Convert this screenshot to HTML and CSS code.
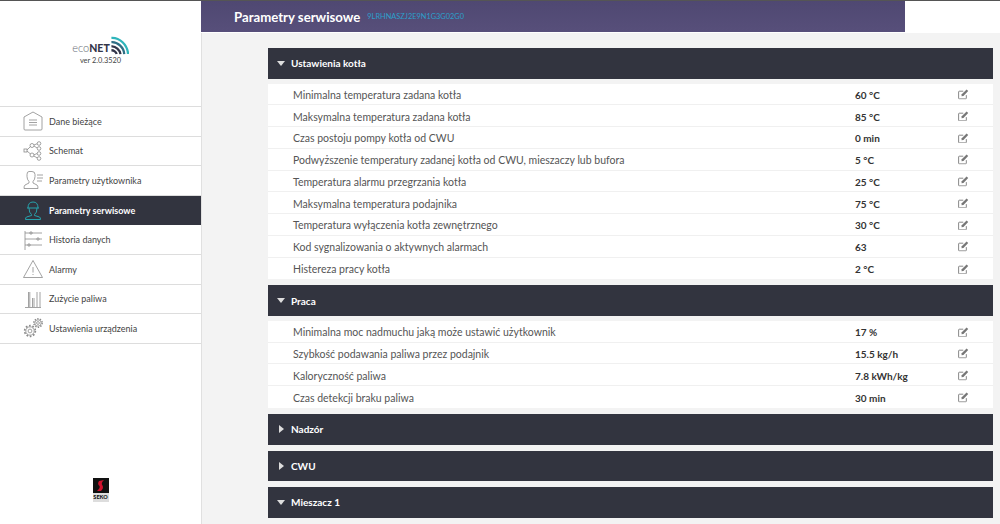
FILE: index.html
```html
<!DOCTYPE html>
<html lang="pl">
<head>
<meta charset="utf-8">
<title>Parametry serwisowe</title>
<link rel="stylesheet" href="styles.css">
</head>
<body>
<div class="app">
  <aside class="sidebar">
    <div class="brand">
      <div class="logo">
        <span class="logo-eco">eco</span><span class="logo-net">NET</span>
        <svg class="logo-waves" viewBox="0 0 20 20" width="19" height="19" fill="none" stroke-width="2.4">
          <path d="M1.500 2 C10 1.500 18.500 9 19 19" stroke="#2fb5bb"/>
          <path d="M1.500 6.500 C8 6 14.500 12 15 19" stroke="#2f6f85"/>
          <path d="M1.500 11 C6 10.500 10.500 15 11 19" stroke="#33364a"/>
          <path d="M1.500 15 C4 15 6.500 17 7 19" stroke="#33364a"/>
        </svg>
      </div>
      <div class="version">ver 2.0.3520</div>
    </div>
    <nav class="menu">
      <a class="menu-item"><svg class="menu-icon" viewBox="0 0 20 20" fill="none" stroke="#8a8a8a" stroke-width="0.8"><path d="M1 6 L10 1 L19 6 V18 Q19 19 18 19 H2 Q1 19 1 18 Z"/><path d="M6 9h8M6 11.500h8M6 14h8"/></svg>Dane bieżące</a>
      <a class="menu-item"><svg class="menu-icon" viewBox="0 0 20 20" fill="none" stroke="#8a8a8a" stroke-width="0.8"><rect x="1" y="8" width="3" height="3"/><circle cx="9" cy="4.500" r="2"/><circle cx="9" cy="14" r="2"/><circle cx="16" cy="2.500" r="1.800"/><circle cx="16" cy="7.500" r="1.800"/><circle cx="16" cy="12.500" r="1.800"/><circle cx="16" cy="17.500" r="1.800"/><path d="M4 9l3.500-3.500M4 10l3.500 3M11 4l3.200-1.300M11 5l3.200 2M11 13.800l3.200-1.300M10.800 15l3.700 2"/></svg>Schemat</a>
      <a class="menu-item"><svg class="menu-icon" viewBox="0 0 20 20" fill="none" stroke="#8a8a8a" stroke-width="0.8"><path d="M6 1.500h3q3 0 3 3v2q0 3-2 5v1.500l4 2q1 .7 1 3.500H1q0-2.800 1-3.500l4-2v-1.500q-2-2-2-5v-2q0-3 2-3z"/><path d="M14 5h6M14 8h6M14 11h5"/></svg>Parametry użytkownika</a>
      <a class="menu-item menu-item-active"><svg class="menu-icon" viewBox="0 0 20 20" fill="none" stroke="#27a3ad" stroke-width="1"><path d="M5 8q0-6 5-6t5 6M4 8h12M6 8q0 5 2.500 6.500v1l-5 1.500q-1 .5-1 2.500h15q0-2-1-2.500l-5-1.500v-1Q14 13 14 8"/></svg>Parametry serwisowe</a>
      <a class="menu-item"><svg class="menu-icon" viewBox="0 0 20 20" fill="none" stroke="#8a8a8a" stroke-width="0.8"><path d="M2 1v19M2 3h17M2 9h17M2 15h17"/><circle cx="8" cy="3" r="1.200"/><circle cx="15" cy="9" r="1.200"/><circle cx="6" cy="15" r="1.200"/></svg>Historia danych</a>
      <a class="menu-item"><svg class="menu-icon" viewBox="0 0 20 20" fill="none" stroke="#8a8a8a" stroke-width="0.8"><path d="M10 1.500 L19.500 18.500 H.5 Z"/><path d="M10 8v5.500M10 15v1"/></svg>Alarmy</a>
      <a class="menu-item"><svg class="menu-icon" viewBox="0 0 20 20" fill="none" stroke="#8a8a8a" stroke-width="0.8"><path d="M2 18.500h16M5.500 18V3M6.800 18V3M9.500 18V9M11 18V9M14 18V3M17 18V3"/></svg>Zużycie paliwa</a>
      <a class="menu-item"><svg class="menu-icon" viewBox="0 0 20 20" fill="none" stroke="#8a8a8a"><circle cx="7" cy="13" r="4.200" stroke-width="0.8"/><circle cx="7" cy="13" r="5.400" stroke-width="1.600" stroke-dasharray="1.700 1.700"/><circle cx="7" cy="13" r="1.900" stroke-width="0.8"/><circle cx="15" cy="5" r="3.200" stroke-width="0.8"/><circle cx="15" cy="5" r="4.200" stroke-width="1.400" stroke-dasharray="1.400 1.240"/><circle cx="15" cy="5" r="1.400" stroke-width="0.8"/></svg>Ustawienia urządzenia</a>
    </nav>
    <div class="seko">
      <div class="seko-mark"><svg viewBox="0 0 15 15" width="15" height="15"><path d="M11 2 L6 3 Q4 6 6.500 8 Q7.500 10 4 13 L8 13 Q11 10 9.500 7.500 Q7.500 5 11 2Z" fill="#d0122e"/></svg></div>
      <div class="seko-name">SEKO</div>
    </div>
  </aside>
  <main class="main">
    <header class="topbar-row">
      <div class="topbar">
        <h1 class="page-title">Parametry serwisowe</h1>
        <span class="device-id">9LRHNASZJ2E9N1G3G02G0</span>
      </div>
    </header>
    <div class="content">
      <section class="group">
        <h2 class="group-head"><span class="tri tri-down"></span>Ustawienia kotła</h2>
        <div class="rows">
          <div class="row"><span class="row-name">Minimalna temperatura zadana kotła</span><span class="row-val">60 °C</span><svg class="edit" viewBox="0 0 12 12"><use href="#pen"/></svg></div>
          <div class="row"><span class="row-name">Maksymalna temperatura zadana kotła</span><span class="row-val">85 °C</span><svg class="edit" viewBox="0 0 12 12"><use href="#pen"/></svg></div>
          <div class="row"><span class="row-name">Czas postoju pompy kotła od CWU</span><span class="row-val">0 min</span><svg class="edit" viewBox="0 0 12 12"><use href="#pen"/></svg></div>
          <div class="row"><span class="row-name">Podwyższenie temperatury zadanej kotła od CWU, mieszaczy lub bufora</span><span class="row-val">5 °C</span><svg class="edit" viewBox="0 0 12 12"><use href="#pen"/></svg></div>
          <div class="row"><span class="row-name">Temperatura alarmu przegrzania kotła</span><span class="row-val">25 °C</span><svg class="edit" viewBox="0 0 12 12"><use href="#pen"/></svg></div>
          <div class="row"><span class="row-name">Maksymalna temperatura podajnika</span><span class="row-val">75 °C</span><svg class="edit" viewBox="0 0 12 12"><use href="#pen"/></svg></div>
          <div class="row"><span class="row-name">Temperatura wyłączenia kotła zewnętrznego</span><span class="row-val">30 °C</span><svg class="edit" viewBox="0 0 12 12"><use href="#pen"/></svg></div>
          <div class="row"><span class="row-name">Kod sygnalizowania o aktywnych alarmach</span><span class="row-val">63</span><svg class="edit" viewBox="0 0 12 12"><use href="#pen"/></svg></div>
          <div class="row"><span class="row-name">Histereza pracy kotła</span><span class="row-val">2 °C</span><svg class="edit" viewBox="0 0 12 12"><use href="#pen"/></svg></div>
        </div>
      </section>
      <section class="group">
        <h2 class="group-head"><span class="tri tri-down"></span>Praca</h2>
        <div class="rows">
          <div class="row"><span class="row-name">Minimalna moc nadmuchu jaką może ustawić użytkownik</span><span class="row-val">17 %</span><svg class="edit" viewBox="0 0 12 12"><use href="#pen"/></svg></div>
          <div class="row"><span class="row-name">Szybkość podawania paliwa przez podajnik</span><span class="row-val">15.5 kg/h</span><svg class="edit" viewBox="0 0 12 12"><use href="#pen"/></svg></div>
          <div class="row"><span class="row-name">Kaloryczność paliwa</span><span class="row-val">7.8 kWh/kg</span><svg class="edit" viewBox="0 0 12 12"><use href="#pen"/></svg></div>
          <div class="row"><span class="row-name">Czas detekcji braku paliwa</span><span class="row-val">30 min</span><svg class="edit" viewBox="0 0 12 12"><use href="#pen"/></svg></div>
        </div>
      </section>
      <section class="group"><h2 class="group-head"><span class="tri tri-right"></span>Nadzór</h2></section>
      <section class="group"><h2 class="group-head"><span class="tri tri-right"></span>CWU</h2></section>
      <section class="group"><h2 class="group-head"><span class="tri tri-down"></span>Mieszacz 1</h2></section>
    </div>
  </main>
</div>
<svg class="defs" width="0" height="0">
  <symbol id="pen" viewBox="0 0 12 12">
    <path d="M9.500 7V10.500a.8 .8 0 0 1-.8 .8H1.500a.8 .8 0 0 1-.8-.8V3.300a.8 .8 0 0 1 .8-.8H6" fill="none" stroke="#777" stroke-width="1"/>
    <path d="M4 8.200 L4.300 6 L9.800 .5 L11.700 2.400 L6.200 7.900 Z" fill="#777"/>
  </symbol>
</svg>
</body>
</html>
```

FILE: styles.css
```css
* { box-sizing: border-box; }
html, body { margin: 0; height: 100%; overflow: hidden; }
body { font-family: Lato, "Open Sans", sans-serif; color: #444; background: #fff; }
.defs { position: absolute; }

.app { display: flex; height: 524px; border-top: 1px solid #555; }

.sidebar {
  width: 201px;
  flex: none;
  display: flex;
  flex-direction: column;
  background: #fff;
}
.brand { height: 105px; padding-top: 35px; display: flex; flex-direction: column; align-items: center; }
.logo { display: flex; align-items: flex-end; height: 19px; line-height: 14px; font-size: 10.500px; }
.logo-eco { color: #666a75; font-size: 11px; font-weight: 300; }
.logo-net { color: #33364a; font-weight: 900; }
.version { font-size: 7.400px; line-height: 12px; color: #444; }

.menu { border-top: 1px solid #ddd; }
.menu-item {
  display: flex;
  align-items: center;
  height: 29.600px;
  padding-left: 23px;
  border-bottom: 1px solid #ddd;
  font-size: 9px;
  color: #444;
}
.menu-icon { width: 20px; height: 20px; margin-right: 6px; flex: none; }
.menu-item-active { background: #32343f; color: #fff; font-weight: 700; border-bottom-color: #32343f; }

.seko { margin-top: 134px; align-self: center; display: flex; flex-direction: column; align-items: center; width: 16px; background: #111; }
.seko-mark { width: 16px; height: 15px; display: flex; justify-content: center; background: #111; }
.seko-name { width: 16px; background: #ddd; color: #111; font-size: 5.500px; line-height: 9px; font-weight: 900; text-align: center; }

.main { flex: 1; min-width: 0; background: #f3f3f3; box-shadow: inset 1px 0 0 #e0e0e0; }
.topbar-row { height: 32px; background: #fff; }
.topbar {
  width: 704px;
  height: 31px;
  display: flex;
  align-items: center;
  padding-left: 33px;
  gap: 7px;
  background: linear-gradient(#4f4872, #574f7a);
}
.page-title { margin: 0; font-size: 13.200px; font-weight: 700; color: #fff; }
.device-id { font-size: 7.400px; color: #2c9fcb; }

.content { padding: 15px 7px 0 67px; display: flex; flex-direction: column; gap: 6px; }
.group-head {
  margin: 0;
  height: 30.600px;
  display: flex;
  align-items: center;
  padding-left: 9px;
  background: #32343f;
  color: #fff;
  font-size: 10px;
  font-weight: 700;
}
.tri { width: 14px; display: flex; flex: none; }
.tri-down::before { content: ""; border-left: 4.500px solid transparent; border-right: 4.500px solid transparent; border-top: 5px solid #ddd; }
.tri-right::before { content: ""; margin-left: 2px; border-top: 4px solid transparent; border-bottom: 4px solid transparent; border-left: 5px solid #ddd; }

.rows { margin-top: 5px; background: #fff; }
.row {
  display: flex;
  align-items: center;
  height: 21.750px;
  padding-left: 25px;
  padding-top: 2px;
  border-bottom: 1px solid #f0f0f0;
  font-size: 10.500px;
}
.row:last-child { border-bottom: 0; }
.row-name { width: 562px; flex: none; color: #555; }
.row-val { width: 103px; flex: none; font-weight: 700; font-size: 10px; color: #333; }
.edit { width: 10.500px; height: 10.500px; flex: none; margin-top: -1px; }
```
